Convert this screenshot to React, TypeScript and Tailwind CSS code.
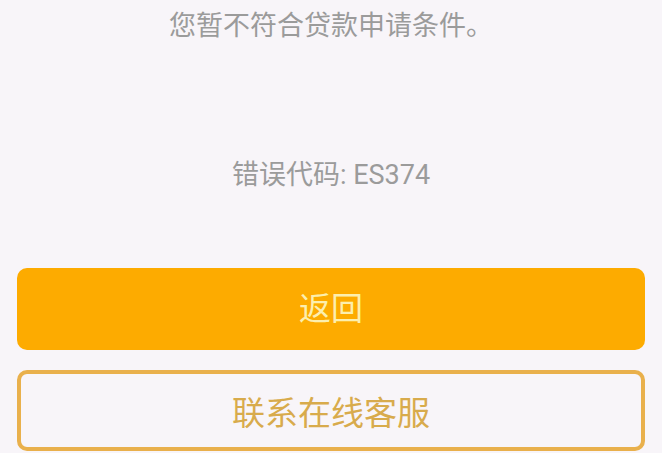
export default function App() {
  return (
    <div
      className="flex h-[453px] w-[662px] flex-col overflow-hidden bg-[#f8f5f9] px-[17px]"
      style={{ fontFamily: "Roboto, 'Noto Sans CJK SC', sans-serif" }}
    >
      <p className="mt-[8px] text-center text-[27px] leading-[36px] text-[#9b9b9b]">
        您暂不符合贷款申请条件。
      </p>
      <p className="mt-[113px] text-center text-[27px] leading-[36px] text-[#9b9b9b]">
        错误代码: ES374
      </p>
      <button className="mt-[75px] flex h-[82px] w-full items-center justify-center rounded-[10px] bg-[#fdab00] text-[32px] text-[#fcefae]">
        返回
      </button>
      <button className="mt-[20px] flex h-[81px] w-full items-center justify-center rounded-[10px] border-[4px] border-[#e9b04c] pt-[6px] text-[33px] text-[#d8ab4c]">
        联系在线客服
      </button>
    </div>
  );
}
